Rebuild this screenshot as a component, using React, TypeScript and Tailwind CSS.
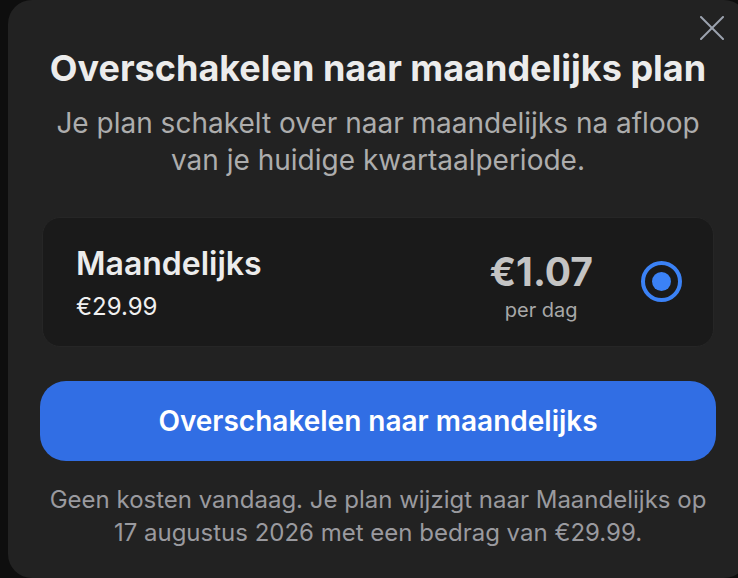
import React from 'react';

const CloseIcon = () => (
  <svg width="24" height="24" viewBox="0 0 24 24" fill="none" stroke="currentColor" strokeWidth="2" strokeLinecap="round">
    <path d="M1 1 23 23" />
    <path d="M23 1 1 23" />
  </svg>
);

const App: React.FC = () => {
  return (
    <div className="w-[738px] h-[578px] bg-[#0e0e0e] overflow-hidden" style={{ fontFamily: 'Inter, "Noto Sans", sans-serif' }}>
      <div className="relative ml-[8px] w-[740px] h-[578px] rounded-[24px] bg-[#222222] px-[32px] pt-[46px] flex flex-col">
        <button className="absolute top-[16px] right-[24px] text-[#9ca3af]">
          <CloseIcon />
        </button>

        <h2 className="text-center text-[36px] leading-[44px] font-bold text-[#ececec] whitespace-nowrap">
          Overschakelen naar maandelijks plan
        </h2>
        <p className="mt-[15px] text-center text-[28px] leading-[37px] text-[#adadad]">
          Je plan schakelt over naar maandelijks na afloop van je huidige kwartaalperiode.
        </p>

        <div className="mt-[38px] mx-[2px] h-[130px] rounded-[18px] bg-[#1a1a1a] border border-[#262626] pl-[33px] pr-[31px] flex items-start">
          <div className="flex-1 flex flex-col pt-[27px]">
            <span className="text-[32px] leading-[38px] font-semibold text-[#ececec]">Maandelijks</span>
            <span className="text-[24px] leading-[30px] text-[#f0f0f0] mt-[9px]">€29.99</span>
          </div>
          <div className="flex flex-col items-center mr-[48px] pt-[32px]">
            <span className="text-[39px] leading-[44px] font-bold text-[#c4c4c4]">€1.07</span>
            <span className="text-[20px] leading-[24px] text-[#a8a8a8] mt-[4px]">per dag</span>
          </div>
          <div className="mt-[43px] w-[41px] h-[41px] rounded-full border-[4px] border-[#3b82f6] flex items-center justify-center">
            <div className="w-[19px] h-[19px] rounded-full bg-[#3b82f6]" />
          </div>
        </div>

        <button className="mt-[34px] h-[80px] w-full rounded-[26px] bg-[#316ee4] text-white text-[28px] font-semibold">
          Overschakelen naar maandelijks
        </button>

        <p className="mt-[22px] px-[4px] text-center text-[24px] leading-[33px] text-[#9a9a9f]">
          Geen kosten vandaag. Je plan wijzigt naar Maandelijks op 17 augustus 2026 met een bedrag van €29.99.
        </p>
      </div>
    </div>
  );
};

export default App;
